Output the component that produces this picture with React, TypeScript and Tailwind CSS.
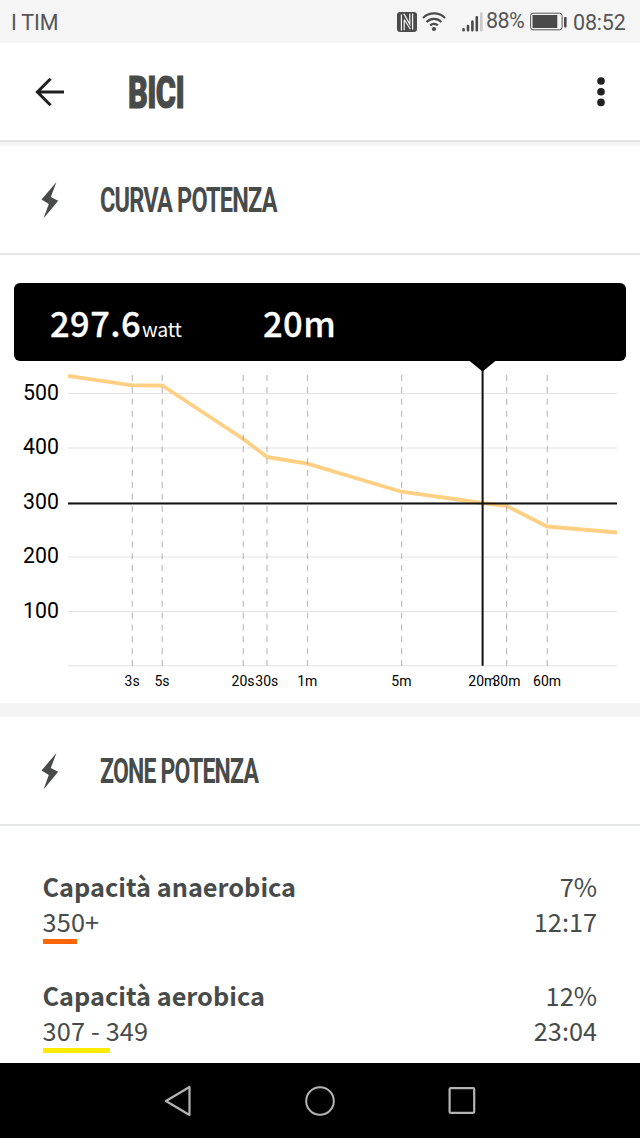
import React from 'react';

interface Zone {
    name: string;
    range: string;
    percent: string;
    time: string;
    barClass: string;
}

const ZONES: Zone[] = [
    { name: 'Capacità anaerobica', range: '350+', percent: '7%', time: '12:17', barClass: 'w-[34px] bg-[#ff6600]' },
    { name: 'Capacità aerobica', range: '307 - 349', percent: '12%', time: '23:04', barClass: 'w-[67px] bg-[#ffea00]' },
];

const Y_TICKS = [
    { label: '500', y: 393.5 },
    { label: '400', y: 448 },
    { label: '300', y: 502.5 },
    { label: '200', y: 557 },
    { label: '100', y: 611.5 },
    { label: '', y: 665.7 },
];

const X_TICKS = [
    { label: '3s', x: 132.3 },
    { label: '5s', x: 162.2 },
    { label: '20s', x: 243.3 },
    { label: '30s', x: 267 },
    { label: '1m', x: 307.5 },
    { label: '5m', x: 401.6 },
    { label: '20m', x: 482.5 },
    { label: '30m', x: 506.6 },
    { label: '60m', x: 547.3 },
];

const CURVE = '68,375.9 132,385.3 162.3,385.5 243.3,439 267,457 307.5,463.6 401.5,491.7 482.5,503 507,506 547,526.5 617,532.5';

const StatusBar = () => (
    <div className="flex h-[43px] shrink-0 items-center bg-[#f5f5f5] pl-[11px] pr-[14px] font-['Roboto',sans-serif] text-[21.5px] leading-[44px] text-[#555]">
        <span className="translate-y-px tracking-[-0.2px]">I TIM</span>
        <svg className="ml-auto" width="20" height="20" viewBox="0 0 20 20">
            <rect width="20" height="20" rx="3" fill="#4a4a4a" />
            <path d="M4.4 2.5V18.6M7.2 7.5V18.2M7.2 7.5L13.4 17.2M6.8 1.6L12.8 12.2V1.6M15.6 1.4V17.5" fill="none" stroke="#f5f5f5" strokeWidth="1.2" />
        </svg>
        <svg className="ml-[5px]" width="24" height="20" viewBox="0 0 24 20" fill="none" stroke="#4a4a4a" strokeWidth="2.2">
            <path d="M1 6a15.6 15.6 0 0 1 22 0M4.6 10a10.4 10.4 0 0 1 14.8 0M8.2 13.4a5.4 5.4 0 0 1 7.6 0" />
            <circle cx="12" cy="17" r="2.1" fill="#4a4a4a" stroke="none" />
        </svg>
        <svg className="ml-[16px]" width="21" height="20" viewBox="0 0 21 20" strokeLinecap="round" strokeWidth="2.6">
            <path d="M1.6 17.3v1M6 14v4.3M10.4 9.5v8.8M14.8 5.2v13.1" stroke="#4a4a4a" />
            <path d="M19.3 1.5v16.8" stroke="#c9c9c9" />
        </svg>
        <span className="ml-[3px] w-[40px] -translate-y-px whitespace-nowrap tracking-[-0.6px]">88%</span>
        <svg className="ml-[4px]" width="37" height="20" viewBox="0 0 37 20">
            <rect x="0.6" y="1.2" width="31.5" height="16.6" rx="2.5" fill="none" stroke="#555" strokeWidth="1" />
            <rect x="2.5" y="3" width="24.8" height="13" fill="#4a4a4a" />
            <rect x="34" y="5" width="2.6" height="10.4" rx="1" fill="#4a4a4a" />
        </svg>
        <span className="ml-[6px] w-[53px] translate-y-px whitespace-nowrap tracking-[-0.2px]">08:52</span>
    </div>
);

const AppHeader = () => (
    <header className="flex h-[97px] shrink-0 items-center bg-white pl-[35px] pr-[35px] pt-[1px]">
        <svg width="30" height="30" viewBox="0 0 30 30" fill="none" stroke="#202020" strokeWidth="3">
            <path d="M29 15H3M15.6 1.7L2.4 15l13.2 13.3" />
        </svg>
        <h1 className="ml-[62.5px] w-[60px] origin-left translate-y-px scale-x-[0.685] whitespace-nowrap font-['Roboto',sans-serif] text-[45px] font-black leading-[60px] tracking-[-1px] text-[#474b4a] [-webkit-text-stroke:1px_#474b4a]">BICI</h1>
        <svg className="ml-auto" width="8" height="30" viewBox="0 0 8 30" fill="#202020">
            <circle cx="4" cy="4" r="3.8" />
            <circle cx="4" cy="14.7" r="3.8" />
            <circle cx="4" cy="25.4" r="3.8" />
        </svg>
    </header>
);

const SectionHeader: React.FC<{ title: string; scaleClass: string }> = ({ title, scaleClass }) => (
    <div className="flex h-[109px] shrink-0 items-center border-b-2 border-[#e6e7e7] bg-white pl-[41px]">
        <svg width="18" height="38" viewBox="0 0 18 38" fill="#474b4a">
            <path d="M15.5 1L0.5 18.5L7.8 23L2.5 37.5L17.2 19.8L9.8 16Z" />
        </svg>
        <h2 className={`ml-[40.5px] origin-left translate-y-[0.5px] whitespace-nowrap font-['Roboto',sans-serif] text-[35px] font-bold leading-[40px] tracking-[-1.2px] text-[#474b4a] ${scaleClass}`}>{title}</h2>
    </div>
);

const PowerChart = () => (
    <div className="h-[448px] shrink-0 bg-white pt-[28px]">
        <div className="ml-[14px] mr-[14px] flex h-[78px] items-baseline rounded-[6px] bg-black pl-[36px] font-['Noto_Sans_CJK_SC',sans-serif] text-white">
            <span className="w-[92px] whitespace-nowrap text-[34.5px] font-medium leading-[78px] tracking-[0.4px] [-webkit-text-stroke:0.3px_white]">297.6</span>
            <span className="w-[121px] text-[19.5px] leading-[20px] tracking-[-0.2px]">watt</span>
            <span className="text-[34.5px] font-medium leading-[78px] tracking-[0.4px] [-webkit-text-stroke:0.3px_white]">20m</span>
        </div>
        <svg className="block" width="640" height="342" viewBox="0 361 640 342">
            {Y_TICKS.map(({ label, y }) => (
                <g key={y}>
                    <line x1="68" x2="617" y1={y} y2={y} stroke="#e2e2e2" strokeWidth="1.1" />
                    <text x="59" y={y + 6} textAnchor="end" className="fill-black font-['Roboto',sans-serif] text-[21.3px]">{label}</text>
                </g>
            ))}
            <polyline points={CURVE} fill="none" stroke="#ffd083" strokeWidth="3.8" strokeLinejoin="round" />
            {X_TICKS.map(({ label, x }) => (
                <g key={label}>
                    {label !== '20m' && (
                        <line x1={x} x2={x} y1="375" y2="665.7" stroke="#999" strokeOpacity="0.65" strokeWidth="1.2" strokeDasharray="6 5.88" />
                    )}
                    <text x={x - 0.2} y="685.7" textAnchor="middle" className="fill-black font-['Roboto',sans-serif] text-[14px]">{label}</text>
                </g>
            ))}
            {/* selection cursor */}
            <path d="M68 503.4H617M482.6 368V665.7" stroke="#111" strokeWidth="2" />
            <path d="M469 360.5H496L482.6 371.5Z" fill="#000" />
        </svg>
    </div>
);

const ZoneRow: React.FC<{ zone: Zone }> = ({ zone }) => (
    <div className="flex h-[109px] shrink-0 justify-between pl-[42.5px] pr-[43px] font-['Noto_Sans_CJK_SC',sans-serif] text-[25.3px] leading-[35px] text-[#474b4a]">
        <div>
            <div className="font-bold">{zone.name}</div>
            <div className="tracking-[0.15px]">{zone.range}</div>
            <div className={`h-[5px] ${zone.barClass}`} />
        </div>
        <div className="text-right">
            <div>{zone.percent}</div>
            <div>{zone.time}</div>
        </div>
    </div>
);

const NavBar = () => (
    <nav className="flex h-[75px] shrink-0 items-center justify-center gap-[112px] bg-black">
        <svg width="30" height="32" viewBox="0 0 30 32" fill="none" stroke="#b3b3b3" strokeWidth="2.2" strokeLinejoin="round">
            <path d="M26.5 2v28L3 16Z" />
        </svg>
        <svg width="30" height="30" viewBox="0 0 30 30" fill="none" stroke="#b3b3b3" strokeWidth="2">
            <circle cx="15" cy="15" r="13.8" />
        </svg>
        <svg width="30" height="30" viewBox="0 0 30 30" fill="none" stroke="#b3b3b3" strokeWidth="2.2">
            <rect x="2.6" y="2.2" width="24.6" height="24.6" rx="1" />
        </svg>
    </nav>
);

export default function App() {
    return (
        <div className="flex h-[1138px] w-[640px] flex-col overflow-hidden bg-white">
            <StatusBar />
            <AppHeader />
            <div className="h-[6px] shrink-0 border-t-2 border-[#e3e3e3] bg-[#f5f5f5]" />
            <SectionHeader title="CURVA POTENZA" scaleClass="scale-x-[0.672]" />
            <PowerChart />
            <div className="h-[14px] shrink-0 bg-[#f4f4f4]" />
            <SectionHeader title="ZONE POTENZA" scaleClass="scale-x-[0.658]" />
            <main className="h-[237px] shrink-0 overflow-hidden pt-[43px]">
                {ZONES.map((zone) => (
                    <ZoneRow key={zone.name} zone={zone} />
                ))}
            </main>
            <NavBar />
        </div>
    );
}
